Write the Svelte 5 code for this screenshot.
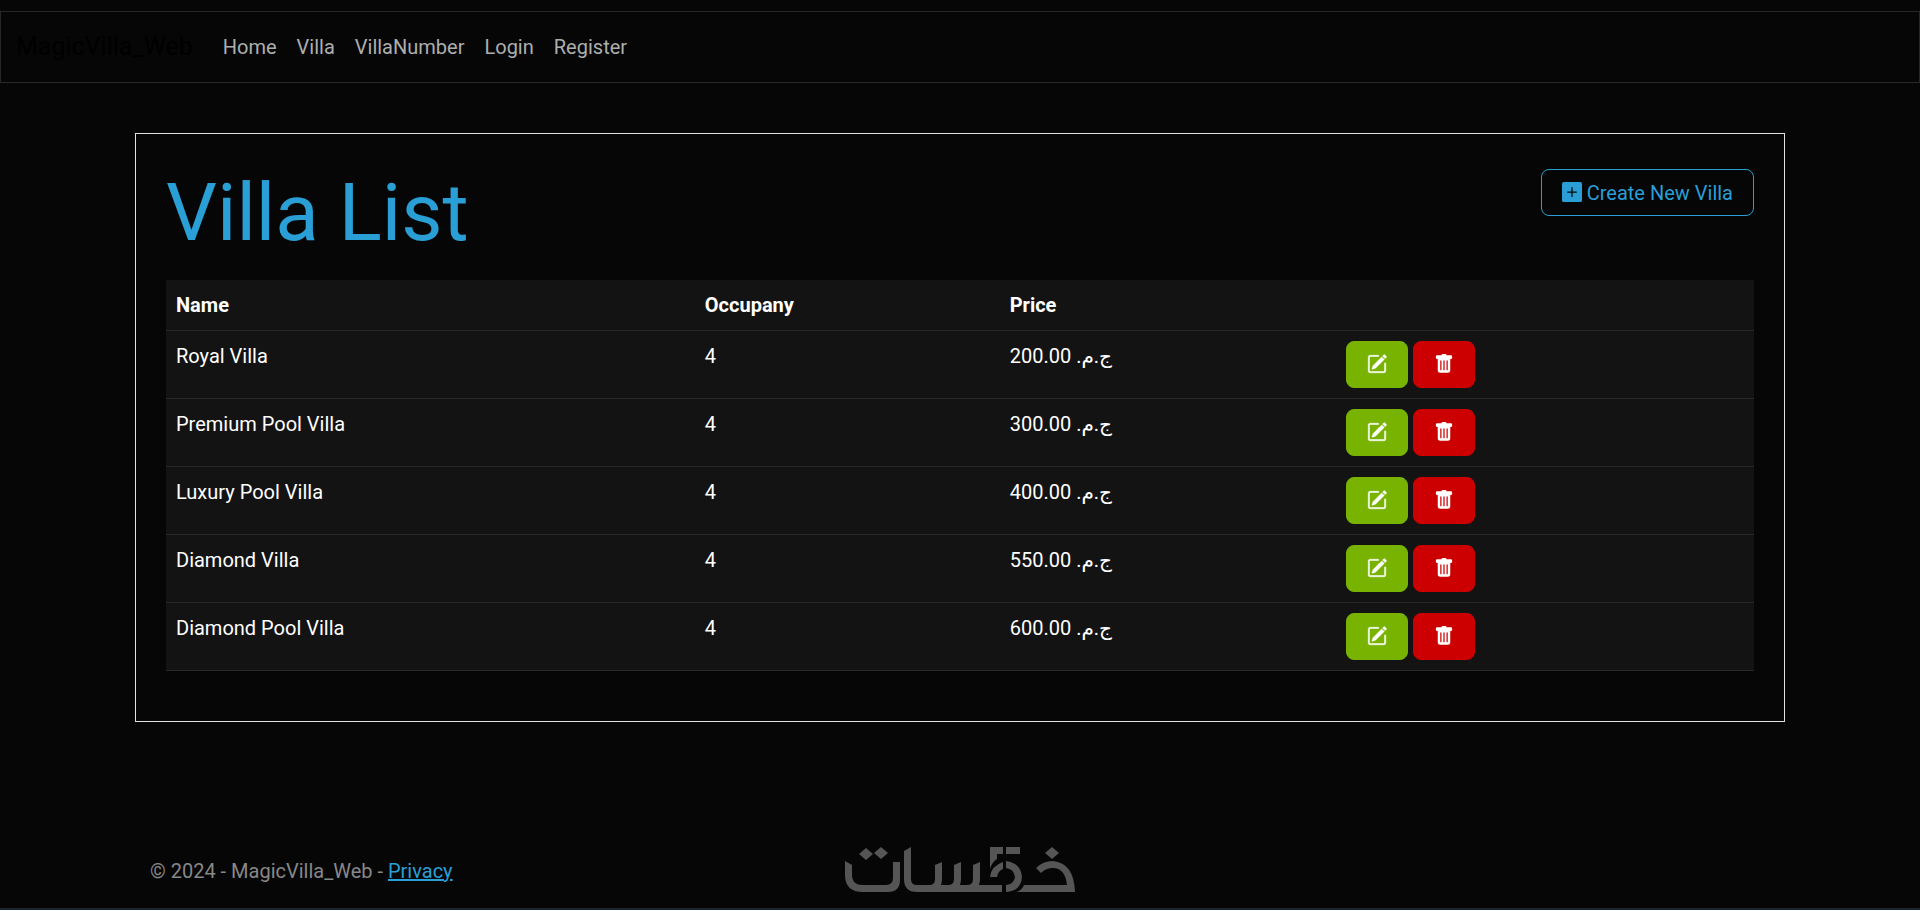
<script>
  const links = ['Home', 'Villa', 'VillaNumber', 'Login', 'Register'];

  let villas = $state([
    { id: 1, name: 'Royal Villa', occupancy: 4, rate: 200 },
    { id: 2, name: 'Premium Pool Villa', occupancy: 4, rate: 300 },
    { id: 3, name: 'Luxury Pool Villa', occupancy: 4, rate: 400 },
    { id: 4, name: 'Diamond Villa', occupancy: 4, rate: 550 },
    { id: 5, name: 'Diamond Pool Villa', occupancy: 4, rate: 600 }
  ]);

  // the right-to-left mark keeps the last dot with the currency
  function price(rate) {
    return 'ج.م.\u200f ' + rate.toFixed(2);
  }

  function remove(id) {
    villas = villas.filter((v) => v.id !== id);
  }
</script>

<div class="page">
  <header>
    <nav>
      <a class="brand" href="#home">MagicVilla_Web</a>
      <ul>
        {#each links as link}
          <li><a href="#{link}">{link}</a></li>
        {/each}
      </ul>
    </nav>
  </header>

  <main>
    <div class="title-row">
      <h1>Villa List</h1>
      <a class="create" href="#create">
        <svg viewBox="0 0 16 16" aria-hidden="true">
          <path d="M1.500 0A1.500 1.500 0 0 0 0 1.500v13A1.500 1.500 0 0 0 1.500 16h13a1.500 1.500 0 0 0 1.500-1.500v-13A1.500 1.500 0 0 0 14.500 0h-13zm7 4.500v3h3a.5.5 0 0 1 0 1h-3v3a.5.5 0 0 1-1 0v-3h-3a.5.5 0 0 1 0-1h3v-3a.5.5 0 0 1 1 0z" />
        </svg>
        Create New Villa
      </a>
    </div>
    <table>
      <colgroup>
        <col class="name" />
        <col class="occupancy" />
        <col class="price" />
        <col />
      </colgroup>
      <thead>
        <tr>
          <th>Name</th>
          <th>Occupany</th>
          <th>Price</th>
          <th></th>
        </tr>
      </thead>
      <tbody>
        {#each villas as villa (villa.id)}
          <tr>
            <td>{villa.name}</td>
            <td>{villa.occupancy}</td>
            <td>{price(villa.rate)}</td>
            <td>
              <div class="actions">
                <button class="edit" aria-label="Edit {villa.name}">
                  <svg viewBox="0 0 16 16" aria-hidden="true">
                    <path d="M15.502 1.940a.5.5 0 0 1 0 .706L14.459 3.690l-2-2L13.502.646a.5.5 0 0 1 .707 0l1.293 1.293zm-1.750 2.456-2-2L4.939 9.210a.5.5 0 0 0-.121.196l-.805 2.414a.25.25 0 0 0 .316.316l2.414-.805a.5.5 0 0 0 .196-.120l6.813-6.814z" />
                    <path fill-rule="evenodd" d="M1 13.500A1.500 1.500 0 0 0 2.500 15h11a1.500 1.500 0 0 0 1.500-1.500v-6a.5.5 0 0 0-1 0v6a.5.5 0 0 1-.5.5h-11a.5.5 0 0 1-.5-.5v-11a.5.5 0 0 1 .5-.5H9a.5.5 0 0 0 0-1H2.500A1.500 1.500 0 0 0 1 2.500v11z" />
                  </svg>
                </button>
                <button class="delete" aria-label="Delete {villa.name}" onclick={() => remove(villa.id)}>
                  <svg viewBox="0 0 16 16" aria-hidden="true">
                    <path d="M2.500 1a1 1 0 0 0-1 1v1a1 1 0 0 0 1 1H3v9a2 2 0 0 0 2 2h6a2 2 0 0 0 2-2V4h.5a1 1 0 0 0 1-1V2a1 1 0 0 0-1-1H10a1 1 0 0 0-1-1H7a1 1 0 0 0-1 1H2.500zm3 4a.5.5 0 0 1 .5.5v7a.5.5 0 0 1-1 0v-7a.5.5 0 0 1 .5-.5zM8 5a.5.5 0 0 1 .5.5v7a.5.5 0 0 1-1 0v-7A.5.5 0 0 1 8 5zm3 .5v7a.5.5 0 0 1-1 0v-7a.5.5 0 0 1 1 0z" />
                  </svg>
                </button>
              </div>
            </td>
          </tr>
        {/each}
      </tbody>
    </table>
  </main>

  <footer>
    <p>&copy; 2024 - MagicVilla_Web - <a href="#privacy">Privacy</a></p>
    <svg class="logo" viewBox="0 0 230 47" role="img" aria-label="Khamsat">
      <path d="M21 1l7 6-7 6-7-6zM36 0l7 6-7 6-7-6zM207 0l7 6-7 6-7-6z" />
      <path d="M0 14l7 4v10q0 10 11 10h23q7 0 7-7V15h7v18q0 12-12 12H18Q0 45 0 28z" />
      <path d="M59 4l7-4v32q0 6 6 6h12q6 0 6-6V18l7-3v17q0 3-1 6h7q6 0 6-6V18l7-3v17q0 3-1 6h7q6 0 6-6V18l7-3v17q0 3-1 6h23v7H72q-13 0-13-13z" />
      <path d="M145 0h13v7h-6v5q-5 3-7 10zM161 0h14v7h-14z" />
      <path d="M158 15v7q-5 2-6 8h-7q1-11 13-15zM161 14q15 2 16 16-1 14-16 15v-7q8-1 9-8-1-8-9-9z" />
      <path d="M191 21q7-7 17-7 21 2 22 31h-58q5-2 7-7h43q-2-17-14-17-7 0-12 5z" />
    </svg>
  </footer>
</div>

<style>
  :global(body) {
    background: #fff;
  }
  .page {
    box-sizing: border-box;
    min-height: calc(100vh - 1px);
    display: flex;
    flex-direction: column;
    padding-top: 11px;
    background: #060606;
    border-bottom: 2px solid #1c2331;
    color: #adafae;
    font: 20px/30px Roboto, "DejaVu Sans", sans-serif;
  }
  a {
    color: #2a9fd6;
  }
  nav {
    display: flex;
    align-items: center;
    padding: 10px 15px;
    border: 1px solid #282828;
  }
  nav a {
    color: #adafae;
    text-decoration: none;
  }
  nav .brand {
    margin-right: 20px;
    font-size: 25px;
    color: #000;
  }
  nav ul {
    display: flex;
    margin: 0;
    padding: 0;
    list-style: none;
  }
  nav li a {
    display: block;
    padding: 10px;
  }
  main {
    box-sizing: border-box;
    width: 100%;
    max-width: 1650px;
    margin: 50px auto 0;
    padding: 30px 30px 50px;
    border: 1px solid #dee2e6;
  }
  .title-row {
    display: flex;
    justify-content: space-between;
    align-items: flex-start;
    margin-bottom: 18px;
  }
  h1 {
    margin: 0;
    font-size: 80px;
    line-height: 98px;
    font-weight: 400;
    color: #2a9fd6;
  }
  svg {
    fill: currentColor;
  }
  .create {
    display: flex;
    align-items: center;
    gap: 5px;
    margin-top: 5px;
    padding: 8px 20px 7px;
    border: 1px solid #2a9fd6;
    border-radius: 8px;
    text-decoration: none;
  }
  .create svg,
  button svg {
    display: block;
    width: 20px;
    height: 20px;
  }
  .create svg {
    margin-bottom: 2px;
  }
  table {
    width: 100%;
    table-layout: fixed;
    border-collapse: collapse;
    background: #131313;
    color: #fff;
  }
  th,
  td {
    padding: 10px;
    border-bottom: 1px solid #282828;
    text-align: left;
    vertical-align: top;
  }
  th {
    font-weight: 700;
  }
  .name {
    width: 33.3%;
  }
  .occupancy {
    width: 19.2%;
  }
  .price {
    width: 21.2%;
  }
  .actions {
    display: flex;
    gap: 5px;
  }
  button {
    padding: 12px 20px 13px;
    border: 1px solid transparent;
    border-radius: 8px;
    color: #fff;
    cursor: pointer;
  }
  .edit {
    background: #77b300;
    border-color: #77b300;
  }
  .edit svg {
    stroke: currentColor;
    stroke-width: 0.4;
  }
  .delete {
    background: #c00;
    border-color: #c00;
  }
  footer {
    box-sizing: border-box;
    display: grid;
    grid-template-columns: 1fr 230px 1fr;
    align-items: center;
    width: 100%;
    max-width: 1650px;
    margin: auto auto 0;
    padding: 0 15px 14px;
    color: #888;
  }
  footer p {
    margin: 0;
  }
  .logo {
    display: block;
    width: 230px;
    height: 47px;
    color: #555;
  }
</style>
